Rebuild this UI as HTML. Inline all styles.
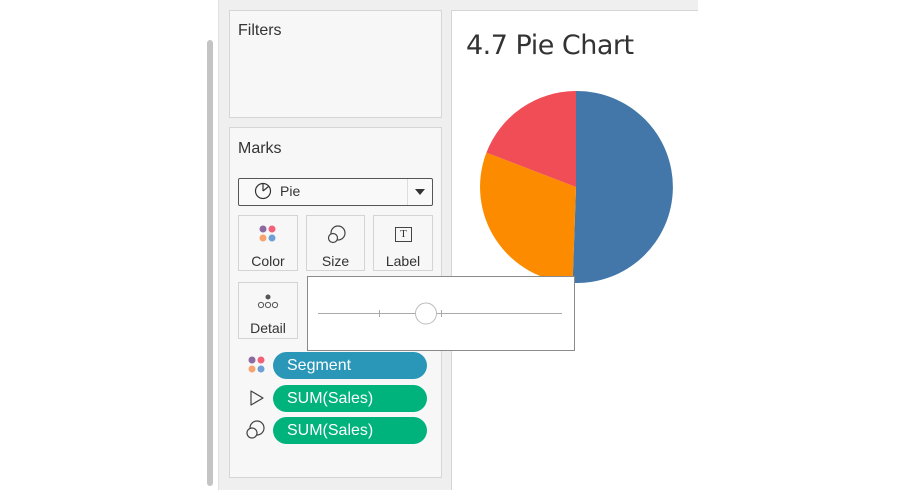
<!DOCTYPE html>
<html><head><meta charset="utf-8"><style>
*{margin:0;padding:0;box-sizing:border-box}
body{width:909px;height:490px;background:#fff;position:relative;overflow:hidden;font-family:"Liberation Sans",sans-serif;color:#333}
.a{position:absolute}
.card{position:absolute;background:#f7f7f7;border:1px solid #d6d6d6}
.btn{position:absolute;background:#f7f7f7;border:1px solid #d4d4d4;font-size:14px;text-align:center;color:#333}
.pill{position:absolute;left:273px;width:154px;height:27px;border-radius:14px;color:#fff;font-size:16px;padding-left:14px;line-height:27px}
</style></head><body>
<div class="a" style="left:207px;top:40px;width:6px;height:446px;background:#c4c4c4;border-radius:3px"></div>
<div class="a" style="left:218px;top:0;width:233px;height:490px;background:#efefef;border-left:1px solid #e0e0e0"></div>
<div class="a" style="left:451px;top:0;width:247px;height:10px;background:#efefef"></div>
<div class="a" style="left:451px;top:10px;width:458px;height:480px;background:#fff;border-left:1px solid #d6d6d6;border-top:1px solid #d6d6d6"></div>
<div class="a" style="left:698px;top:0;width:211px;height:11px;background:#fff"></div>

<div class="card" style="left:229px;top:10px;width:213px;height:108px"></div>
<div class="a" style="left:238px;top:22px;font-size:16px">Filters</div>
<div class="card" style="left:229px;top:127px;width:213px;height:351px"></div>
<div class="a" style="left:238px;top:140px;font-size:16px">Marks</div>

<div class="a" style="left:238px;top:178px;width:195px;height:28px;border:1px solid #555;background:#f9f9f9;border-radius:2px"></div>
<div class="a" style="left:407px;top:179px;width:1px;height:26px;background:#ddd"></div>
<svg class="a" style="left:254px;top:182px" width="18" height="18"><circle cx="9" cy="9" r="7.5" fill="none" stroke="#333" stroke-width="1.2"/><path d="M9 9V2M9 9L14.5 4.5" stroke="#333" stroke-width="1.2" fill="none"/></svg>
<div class="a" style="left:280px;top:183px;font-size:14px">Pie</div>
<div class="a" style="left:415px;top:189px;width:0;height:0;border-left:5px solid transparent;border-right:5px solid transparent;border-top:6px solid #333"></div>

<div class="btn" style="left:238px;top:215px;width:60px;height:56px"><svg style="position:absolute;left:19px;top:9px" width="20" height="20"><circle cx="5" cy="4" r="3.5" fill="#8b6a9f"/><circle cx="14" cy="4" r="3.5" fill="#f2617a"/><circle cx="5" cy="13" r="3.5" fill="#f7a36e"/><circle cx="14" cy="13" r="3.5" fill="#6fa0d5"/></svg><span style="position:absolute;left:0;right:0;top:37px">Color</span></div>
<div class="btn" style="left:306px;top:215px;width:59px;height:56px"><svg style="position:absolute;left:19px;top:8px" width="22" height="22"><circle cx="12" cy="9" r="7" fill="none" stroke="#444" stroke-width="1.2"/><circle cx="7" cy="14" r="4.5" fill="#f7f7f7" stroke="#444" stroke-width="1.2"/></svg><span style="position:absolute;left:0;right:0;top:37px">Size</span></div>
<div class="btn" style="left:373px;top:215px;width:60px;height:56px"><div style="position:absolute;left:21px;top:11px;width:17px;height:15px;border:1px solid #444;font-family:'Liberation Serif',serif;font-size:11px;line-height:13px">T</div><span style="position:absolute;left:0;right:0;top:37px">Label</span></div>
<div class="btn" style="left:238px;top:282px;width:60px;height:57px"><svg style="position:absolute;left:16px;top:10px" width="26" height="18"><circle cx="13" cy="4" r="2.5" fill="#555"/><circle cx="6" cy="12" r="2.6" fill="none" stroke="#555"/><circle cx="13" cy="12" r="2.6" fill="none" stroke="#555"/><circle cx="20" cy="12" r="2.6" fill="none" stroke="#555"/></svg><span style="position:absolute;left:0;right:0;top:37px">Detail</span></div>

<svg class="a" style="left:247px;top:356px" width="20" height="20"><circle cx="5" cy="4" r="3.5" fill="#8b6a9f"/><circle cx="14" cy="4" r="3.5" fill="#f2617a"/><circle cx="5" cy="13" r="3.5" fill="#f7a36e"/><circle cx="14" cy="13" r="3.5" fill="#6fa0d5"/></svg>
<div class="pill" style="top:352px;background:#2a96b8">Segment</div>
<svg class="a" style="left:247px;top:388px" width="20" height="20"><path d="M4 3L16 10L4 17Z" fill="none" stroke="#444" stroke-width="1.2" stroke-linejoin="round"/></svg>
<div class="pill" style="top:385px;background:#00b27c">SUM(Sales)</div>
<svg class="a" style="left:245px;top:419px" width="22" height="22"><circle cx="12" cy="9" r="7" fill="none" stroke="#444" stroke-width="1.2"/><circle cx="7" cy="14" r="5" fill="#f7f7f7" stroke="#444" stroke-width="1.2"/></svg>
<div class="pill" style="top:417px;background:#00b27c">SUM(Sales)</div>

<div class="a" style="left:466px;top:30px;font-size:27px;color:#333;font-family:'DejaVu Sans','Liberation Sans',sans-serif;letter-spacing:-0.5px">4.7 Pie Chart</div>
<svg class="a" style="left:0;top:0" width="909" height="490">
<path d="M576 187L576 91A96 96 0 1 1 572.6 282.9Z" fill="#4377a9"/>
<path d="M576 187L572.6 282.9A96 96 0 0 1 486.4 152.6Z" fill="#fc8b00"/>
<path d="M576 187L486.4 152.6A96 96 0 0 1 576 91Z" fill="#f04d56"/>
<rect x="307.5" y="276.5" width="267" height="74" fill="#fff" stroke="#8a8a8a"/>
<line x1="318" y1="313.5" x2="562" y2="313.5" stroke="#aaa"/>
<line x1="379.5" y1="310" x2="379.5" y2="317" stroke="#aaa"/>
<line x1="441.5" y1="310" x2="441.5" y2="317" stroke="#aaa"/>
<circle cx="426" cy="313.5" r="10.5" fill="#fff" stroke="#bbb"/>
</svg>
</body></html>
